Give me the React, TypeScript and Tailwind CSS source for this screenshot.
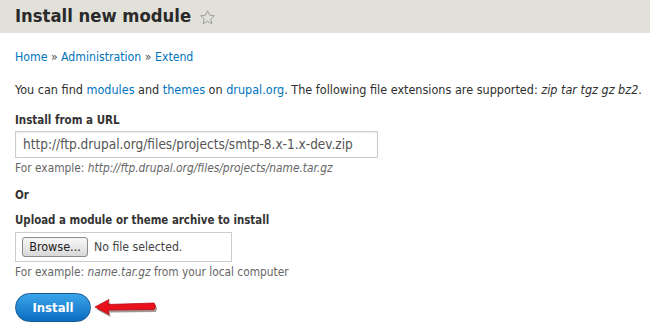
export default function App() {
  const font = { fontFamily: '"DejaVu Sans Condensed", "DejaVu Sans", Verdana, sans-serif' };
  return (
    <div className="h-[335px] w-[650px] overflow-hidden bg-white text-[#333]" style={font}>
      <div className="flex h-[33px] items-center bg-[#e1e0d9] px-[15px]">
        <h1 className="text-[18.3px] font-bold leading-none text-[#2a2a2a]">Install new module</h1>
        <svg width="17" height="17" viewBox="0 0 24 24" className="ml-[8px] mt-[1px]">
          <path
            d="M12 2.5l2.9 6.3 6.8.7-5.1 4.6 1.5 6.7L12 17.4l-6.1 3.4 1.5-6.7-5.1-4.6 6.8-.7z"
            fill="none"
            stroke="#9a9a9a"
            strokeWidth="1.3"
            strokeLinejoin="round"
          />
        </svg>
      </div>
      <div className="px-[15px]">
        <div className="mt-[16px] text-[12.2px] leading-[16px] text-[#0074bd]">
          Home <span className="text-[#555]">»</span> Administration <span className="text-[#555]">»</span> Extend
        </div>
        <p className="mt-[16px] whitespace-nowrap text-[12.5px] leading-[18px] text-[#2e2e2e]">
          You can find <span className="text-[#0074bd]">modules</span> and{" "}
          <span className="text-[#0074bd]">themes</span> on{" "}
          <span className="text-[#0074bd]">drupal.org</span>. The following file extensions are supported:{" "}
          <em>zip tar tgz gz bz2</em>.
        </p>
        <div className="mt-[13px] text-[11.5px] font-bold leading-[16px]">Install from a URL</div>
        <div className="mt-[3px] flex h-[27px] w-[363px] items-center border border-[#ccc] px-[7px] text-[13.5px] text-[#555] shadow-[inset_0_1px_2px_rgba(0,0,0,0.08)]">
          http://ftp.drupal.org/files/projects/smtp-8.x-1.x-dev.zip
        </div>
        <div className="mt-[3px] text-[11.85px] leading-[14px] text-[#666]">
          For example: <em>http://ftp.drupal.org/files/projects/name.tar.gz</em>
        </div>
        <div className="mt-[12px] text-[11.5px] font-bold leading-[16px]">Or</div>
        <div className="mt-[9px] text-[11.4px] font-bold leading-[16px]">
          Upload a module or theme archive to install
        </div>
        <div className="mt-[4px] flex h-[30px] w-[217px] items-center gap-[6px] border border-[#ccc] px-[6px] text-[12.2px]">
          <span className="flex h-[20px] w-[66px] items-center justify-center rounded-[3px] border border-[#8a8a8a] bg-gradient-to-b from-[#f8f8f8] to-[#d8d8d8] text-[12.5px] text-[#222]">
            Browse...
          </span>
          <span className="text-[#444]">No file selected.</span>
        </div>
        <div className="mt-[3px] text-[11.8px] leading-[14px] text-[#666]">
          For example: <em>name.tar.gz</em> from your local computer
        </div>
        <div className="mt-[14px] flex items-center">
          <button className="flex h-[29px] w-[76px] items-center justify-center rounded-full border border-[#1a5a92] bg-gradient-to-b from-[#3aa5ea] to-[#0b6cc0] text-[13px] font-bold text-white">
            Install
          </button>
          <svg width="68" height="22" viewBox="0 0 68 22" className="ml-[1px] mt-[1px]">
            <path
              d="M3 10 L17 2.5 L16 7.5 L62 6 Q65 9 62 12.5 L16 13 L17 17.5 Z"
              fill="#3a1010"
              opacity="0.45"
              transform="translate(1.5 2.5)"
            />
            <path
              d="M3 10 L17 2.5 L16 7.5 L62 6 Q65 9 62 12.5 L16 13 L17 17.5 Z"
              fill="#e8111b"
              stroke="#b80a10"
              strokeWidth="0.8"
              strokeLinejoin="round"
            />
          </svg>
        </div>
      </div>
    </div>
  );
}
